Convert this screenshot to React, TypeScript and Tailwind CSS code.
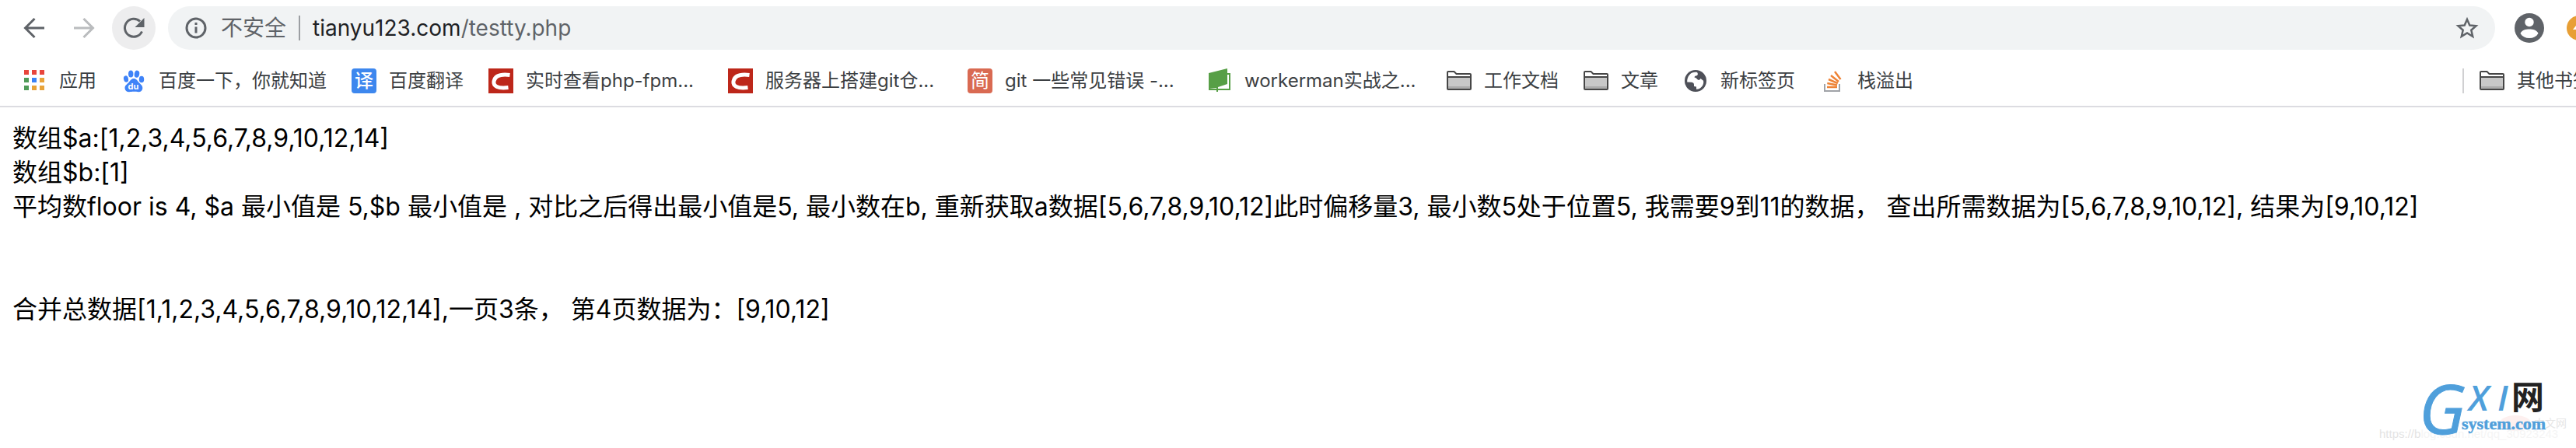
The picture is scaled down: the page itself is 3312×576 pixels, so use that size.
import { ReactNode } from "react";

function AppsIcon() {
  return (
    <svg viewBox="0 0 32 32" className="size-8">
      <path fill="#e8453c" d="M3 2h6v6H3zM13 2h6v6h-6zM23 2h6v6h-6z" />
      <path fill="#4f9b58" d="M3 12h6v6H3zM3 22h6v6H3z" />
      <path fill="#3b82f6" d="M13 12h6v6h-6z" />
      <path fill="#e8a33a" d="M23 12h6v6h-6zM13 22h6v6h-6zM23 22h6v6h-6z" />
    </svg>
  );
}

function BaiduIcon() {
  return (
    <svg viewBox="0 0 32 32" className="size-8" fill="#3f83f8">
      <ellipse cx="6" cy="13.500" rx="3" ry="4.200" transform="rotate(-12 6 13.500)" />
      <ellipse cx="12.200" cy="7" rx="3.200" ry="4.600" />
      <ellipse cx="20" cy="7.200" rx="3.200" ry="4.600" transform="rotate(10 20 7.200)" />
      <ellipse cx="26" cy="14" rx="3.200" ry="4.300" />
      <path d="M16 13c3 0 4.500 2.500 6.500 5 2 2.300 5 3.700 4.800 7.500-.2 3-2.300 4.700-5.300 4.700-2 0-3.500-.4-6-.4s-4 .4-6 .4c-3 0-5.300-1.700-5.500-4.700C4.300 21.700 7.500 20.300 9.500 18c2-2.500 3.500-5 6.500-5z" />
      <text x="15.500" y="27" textAnchor="middle" fontSize="11" fontWeight="700" fill="#fff" fontFamily="Inter, sans-serif">
        du
      </text>
    </svg>
  );
}

function TileIcon({ text, className }: { text: string; className: string }) {
  return (
    <span className={`flex size-8 items-center justify-center text-white ${className}`}>{text}</span>
  );
}

function CsdnIcon() {
  return (
    <svg viewBox="0 0 32 32" className="size-8">
      <path fill="#bd271a" d="M0 0h32v32H0z" />
      <path fill="none" stroke="#fff" strokeWidth="5" d="M27.500 8.500C16 7 8.500 9.500 7 16.500c-1 6.500 5 9.500 18.500 8" />
    </svg>
  );
}

function BookIcon() {
  return (
    <svg viewBox="0 0 32 32" className="size-8">
      <path fill="none" stroke="#579f46" strokeWidth="2" d="M24 7h5v20H3v-5" />
      <path fill="#579f46" d="M2 6 26 0v20l-9 3-3 1v6h-2v-5l-10 1z" />
    </svg>
  );
}

function FolderIcon() {
  return (
    <svg viewBox="0 0 32 32" className="size-8">
      <path fill="#fff" d="M1 27V5q0-1 1-1h8l3 3h17q1 0 1 1v19z" />
      <path fill="#c8c8c8" d="M2 11h28v13H2z" />
      <path fill="#ababab" d="M2 23h28v3H2z" />
      <path fill="none" stroke="#464646" strokeWidth="2" d="M1 26V5q0-1 1-1h7.500l3 3H30q1 0 1 1v18q0 1-1 1H2q-1 0-1-1zM1 11h30" />
    </svg>
  );
}

function GlobeIcon() {
  return (
    <svg viewBox="0 0 32 32" className="size-8">
      <circle cx="16" cy="16" r="14" fill="#4e5058" />
      <path fill="#fff" d="M18 5c-4-.6-7.500.5-9.600 3C6 10.500 5 14 5.200 17.500l5.800.3c2 .4 3 1.400 3 3.200v2l3 .5v3.200c3.500 0 6.500-2 8.200-5 1-2 1.300-4 .8-6l-3.500-2.700c-1 1.500-2 2.500-3.500 1.500-1.300-1-2-2.800-4.500-3 .2-1.700 1.500-2 3-2.200C18.700 9 19.600 7 18 5z" />
    </svg>
  );
}

function StackIcon() {
  return (
    <svg viewBox="0 0 32 32" className="size-8" fill="none">
      <path stroke="#a0a3a8" strokeWidth="2" d="M6 20v9h19v-9" />
      <path stroke="#ee8336" strokeWidth="2.500" d="M9 24h13M9.300 19l12.700 2.500M11 14l11.800 5.200M14 9l10 8M19 4l7.500 10" />
    </svg>
  );
}

interface Bookmark {
  label: string;
  icon: ReactNode;
  fixed?: boolean;
}

const bookmarks: Bookmark[] = [
  { label: "应用", icon: <AppsIcon /> },
  { label: "百度一下，你就知道", icon: <BaiduIcon /> },
  { label: "百度翻译", icon: <TileIcon text="译" className="rounded bg-[#3d87ee] text-2xl font-medium" /> },
  { label: "实时查看php-fpm...", icon: <CsdnIcon />, fixed: true },
  { label: "服务器上搭建git仓...", icon: <CsdnIcon />, fixed: true },
  { label: "git 一些常见错误 -...", icon: <TileIcon text="简" className="rounded bg-[#d96a52] text-2xl" />, fixed: true },
  { label: "workerman实战之...", icon: <BookIcon />, fixed: true },
  { label: "工作文档", icon: <FolderIcon /> },
  { label: "文章", icon: <FolderIcon /> },
  { label: "新标签页", icon: <GlobeIcon /> },
  { label: "栈溢出", icon: <StackIcon /> },
];

function BookmarkLink({ label, icon, fixed }: Bookmark) {
  return (
    <a href="#" className="flex shrink-0 items-center gap-4">
      {icon}
      <span className={fixed ? "w-[228px]" : ""}>{label}</span>
    </a>
  );
}

function Toolbar() {
  return (
    <div className="flex h-[72px] items-center pl-6">
      <button aria-label="Back" className="flex size-10 items-center justify-center">
        <svg viewBox="0 0 32 32" className="size-8" fill="none" stroke="#5f6368" strokeWidth="3">
          <path d="M29 16H5M16.500 4 4.500 16l12 12" />
        </svg>
      </button>
      <button aria-label="Forward" className="ml-6 flex size-10 items-center justify-center">
        <svg viewBox="0 0 32 32" className="size-8" fill="none" stroke="#babcbe" strokeWidth="3">
          <path d="M3 16h24M15.500 4l12 12-12 12" />
        </svg>
      </button>
      <button aria-label="Reload" className="ml-4 flex size-14 items-center justify-center rounded-full bg-[#ededee]">
        <svg viewBox="0 0 32 32" className="size-8">
          <path d="M26.500 20.500A11.500 11.500 0 1 1 24 7.500" fill="none" stroke="#5f6368" strokeWidth="3" />
          <path d="M29.500 3v12h-12z" fill="#5f6368" />
        </svg>
      </button>
      <div className="ml-4 flex h-14 flex-1 items-center rounded-full bg-[#f1f3f4] pr-5 pl-5">
        <svg viewBox="0 0 32 32" className="size-8" fill="none" stroke="#5f6368" strokeWidth="3">
          <circle cx="16" cy="16" r="12" />
          <path d="M16 14.500v8M16 9v3" />
        </svg>
        <span className="ml-4 text-[28px] text-[#5f6368]">不安全</span>
        <span className="mx-4 h-8 w-0.5 bg-[#9c9fa3]" />
        <span className="flex-1 text-[28px] text-[#5f6368]">
          <span className="text-[#202124]">tianyu123.com</span>/testty.php
        </span>
        <button aria-label="Bookmark this page">
          <svg viewBox="0 0 32 32" className="size-8" fill="none" stroke="#5f6368" strokeWidth="2.500">
            <path d="m16 5 3.300 7.600 8.200.7-6.200 5.400 1.900 8.100L16 22.500l-7.200 4.300 1.900-8.100-6.200-5.400 8.200-.7z" />
          </svg>
        </button>
      </div>
      <button aria-label="Profile" className="ml-6">
        <svg viewBox="0 0 40 40" className="size-10">
          <circle cx="20" cy="20" r="19" fill="#5f6368" />
          <circle cx="20" cy="12.500" r="5.700" fill="#fff" />
          <path d="M8.500 27c2-4.500 7-5.500 11.500-5.500S29.500 22.500 31.500 27C29 31 25 33 20 33S11 31 8.500 27z" fill="#fff" />
        </svg>
      </button>
      <button aria-label="Update" className="ml-7 w-3 overflow-hidden">
        <svg viewBox="0 0 32 32" className="size-8">
          <circle cx="16" cy="16" r="16" fill="#e89f35" />
          <path d="m16 8 8 10h-5v6h-6v-6H8z" fill="#fff" />
        </svg>
      </button>
    </div>
  );
}

function BookmarkBar() {
  return (
    <nav className="flex h-16 items-center gap-8 overflow-hidden pl-7 text-2xl whitespace-nowrap text-[#3c4043]">
      {bookmarks.map((bookmark) => (
        <BookmarkLink key={bookmark.label} {...bookmark} />
      ))}
      <div className="ml-auto flex w-[146px] shrink-0 items-center gap-5">
        <span className="h-8 w-0.5 shrink-0 bg-[#d0d0d2]" />
        <BookmarkLink label="其他书签" icon={<FolderIcon />} />
      </div>
    </nav>
  );
}

function Watermark() {
  return (
    <svg viewBox="0 0 262 96" className="absolute right-0 bottom-0 h-24 w-[262px]">
      <ellipse cx="184" cy="64" rx="20" ry="10" fill="#fdf0ef" />
      <text x="208" y="69" fontSize="14" fill="#e6e6e6" fontFamily="'Noto Sans CJK SC', sans-serif">中文网</text>
      <text x="9" y="83" fontSize="15" fill="#e4e4e4" fontFamily="'Liberation Sans', sans-serif">
        https://b<tspan fill="#f5f5f5">log.csdn.net/qq_30923243</tspan>
      </text>
      <g fill="#4f9fdb" fontStyle="italic" fontFamily="'Open Sans', sans-serif">
        <text x="60" y="78" fontSize="88" stroke="#4f9fdb">G</text>
        <text x="124" y="48" fontSize="46" fontWeight="600">X</text>
        <text x="161" y="48" fontSize="46" fontWeight="600">I</text>
      </g>
      <text x="179" y="46" fontSize="42" fontWeight="700" fill="#222" fontFamily="'Noto Sans CJK SC', sans-serif">网</text>
      <text x="115" y="72" fontSize="22" fontWeight="700" fill="#4f9fdb" stroke="#4f9fdb" strokeWidth=".5" fontFamily="'Liberation Serif', serif">system.com</text>
    </svg>
  );
}

export default function App() {
  return (
    <div className="relative min-h-screen overflow-hidden bg-white font-['Inter','Noto_Sans_CJK_SC',sans-serif]">
      <header className="border-b-2 border-[#dcdce1]">
        <Toolbar />
        <BookmarkBar />
      </header>
      <main className="px-4 pt-[18px] text-[32px] leading-[44px] text-black">
        <p>数组$a:[1,2,3,4,5,6,7,8,9,10,12,14]</p>
        <p>数组$b:[1]</p>
        <p>
          平均数floor is 4, $a 最小值是 5,$b 最小值是 , 对比之后得出最小值是5, 最小数在b,
          重新获取a数据[5,6,7,8,9,10,12]此时偏移量3, 最小数5处于位置5, 我需要9到11的数据，
          查出所需数据为[5,6,7,8,9,10,12], 结果为[9,10,12]
        </p>
        <p className="mt-[88px]">合并总数据[1,1,2,3,4,5,6,7,8,9,10,12,14],一页3条， 第4页数据为：[9,10,12]</p>
      </main>
      <Watermark />
    </div>
  );
}
